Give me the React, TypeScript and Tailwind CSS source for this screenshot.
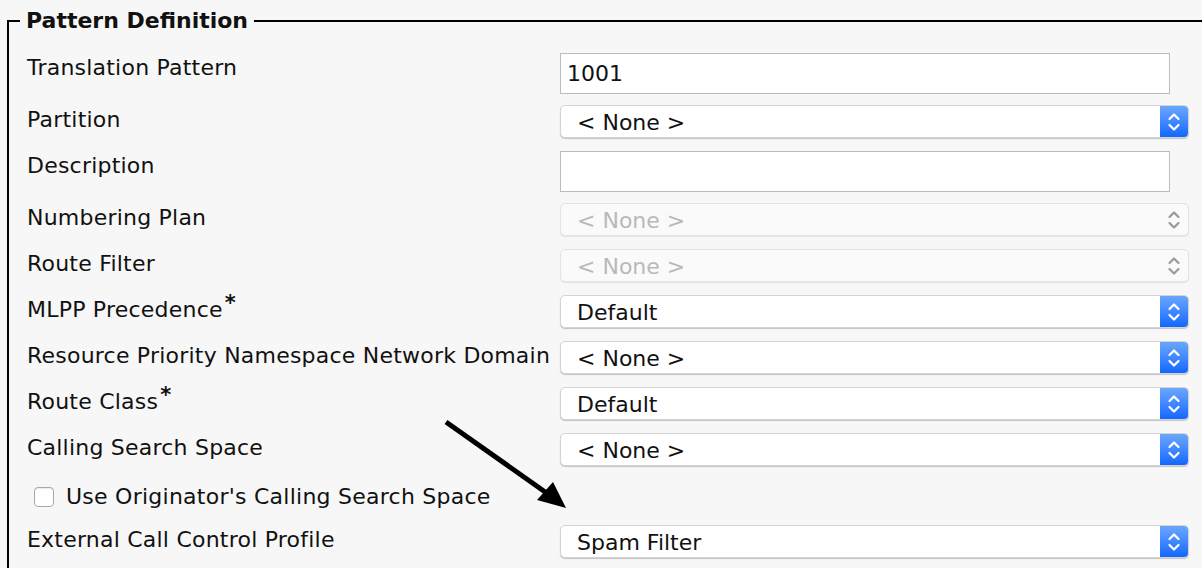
import type { ReactNode } from 'react';

type Row =
  | { kind: 'input'; label: string; value: string }
  | { kind: 'select'; label: string; value: string; required?: boolean; disabled?: boolean }
  | { kind: 'check'; label: string };

const rows: Row[] = [
  { kind: 'input', label: 'Translation Pattern', value: '1001' },
  { kind: 'select', label: 'Partition', value: '< None >' },
  { kind: 'input', label: 'Description', value: '' },
  { kind: 'select', label: 'Numbering Plan', value: '< None >', disabled: true },
  { kind: 'select', label: 'Route Filter', value: '< None >', disabled: true },
  { kind: 'select', label: 'MLPP Precedence', value: 'Default', required: true },
  { kind: 'select', label: 'Resource Priority Namespace Network Domain', value: '< None >' },
  { kind: 'select', label: 'Route Class', value: 'Default', required: true },
  { kind: 'select', label: 'Calling Search Space', value: '< None >' },
  { kind: 'check', label: "Use Originator's Calling Search Space" },
  { kind: 'select', label: 'External Call Control Profile', value: 'Spam Filter' },
];

function Chevrons({ color }: { color: string }) {
  return (
    <svg width="14" height="22" viewBox="0 0 14 22" fill="none" stroke={color} strokeWidth="2.2" strokeLinecap="round" strokeLinejoin="round">
      <path d="M2.5 8 L7 3.5 L11.5 8" />
      <path d="M2.5 14 L7 18.5 L11.5 14" />
    </svg>
  );
}

function Select({ value, disabled }: { value: string; disabled?: boolean }) {
  if (disabled) {
    return (
      <div className="flex items-center w-[629px] h-[33px] rounded-[5px] border border-[#e3e3e3] bg-[#fafafa] shadow-[0_1px_1px_rgba(0,0,0,0.08)]">
        <span className="flex-1 pl-[16px] pt-[2px] text-[#b9b9b9]">{value}</span>
        <span className="w-[28px] flex items-center justify-center">
          <Chevrons color="#9a9a9a" />
        </span>
      </div>
    );
  }
  return (
    <div className="flex items-stretch w-[629px] h-[33px] rounded-[5px] border border-[#d4d4d4] bg-white shadow-[0_1px_1px_rgba(0,0,0,0.22)] overflow-hidden">
      <span className="flex-1 flex items-center pl-[16px] pt-[2px]">{value}</span>
      <span className="w-[28px] flex items-center justify-center bg-gradient-to-b from-[#6aa6fd] to-[#0f66fe]">
        <Chevrons color="#ffffff" />
      </span>
    </div>
  );
}

function Label({ children, required }: { children: ReactNode; required?: boolean }) {
  return (
    <div className="w-[533px] shrink-0 leading-[30px] whitespace-nowrap tracking-[0.22px]">
      {children}
      {required && <span className="relative -top-[7px] ml-[2px] text-[21px] font-bold">*</span>}
    </div>
  );
}

export default function App() {
  return (
    <div className="relative w-[1202px] h-[568px] overflow-hidden bg-[#f7f7f7] text-[#111] text-[22px] font-['DejaVu_Sans',Verdana,sans-serif]">
      <fieldset className="ml-[7px] mt-[9px] border-t-2 border-l-2 border-black w-[1300px]">
        <legend className="ml-[11px] px-[6px] font-bold leading-[24px]">Pattern Definition</legend>
        <div className="pl-[18px] pt-[20px]">
          {rows.map((row) => {
            if (row.kind === 'input') {
              return (
                <div key={row.label} className="flex items-start h-[52px]">
                  <Label>{row.label}</Label>
                  <div className="w-[610px] h-[41px] border border-[#bcbcbc] bg-white flex items-center pl-[6px]">
                    {row.value}
                  </div>
                </div>
              );
            }
            if (row.kind === 'check') {
              return (
                <div key={row.label} className="h-[46px] pt-[4px] pl-[7px]">
                  <div className="flex items-center gap-[12px] leading-[28px] whitespace-nowrap tracking-[0.25px]">
                    <span className="w-[20px] h-[20px] rounded-[4px] border border-[#a9a9a9] bg-white shadow-[inset_0_1px_1px_rgba(0,0,0,0.08)]" />
                    <span>{row.label}</span>
                  </div>
                </div>
              );
            }
            return (
              <div key={row.label} className="flex items-start h-[46px]">
                <Label required={row.required}>{row.label}</Label>
                <Select value={row.value} disabled={row.disabled} />
              </div>
            );
          })}
        </div>
      </fieldset>

      <svg className="absolute left-0 top-0 pointer-events-none" width="1202" height="568">
        <line x1="446" y1="422" x2="548" y2="494" stroke="#000" strokeWidth="5" strokeLinecap="butt" />
        <polygon points="566,508 537,500 553,482" fill="#000" />
      </svg>
    </div>
  );
}
